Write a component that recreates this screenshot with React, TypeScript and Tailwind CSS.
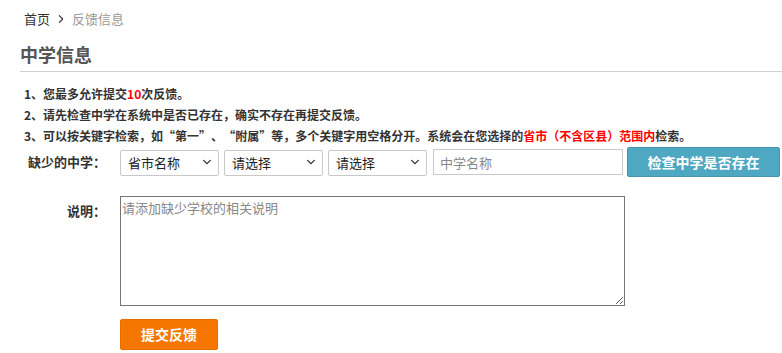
import { ChangeEvent, useState } from "react";
import { IoChevronForward, IoChevronDown } from "react-icons/io5";

const font = "font-['Microsoft_YaHei','Noto_Sans_CJK_SC',sans-serif]";

const SelectBox = ({ value, options, onChange, name }: { value: string; options: string[]; onChange: (e: ChangeEvent<HTMLSelectElement>) => void; name: string }) => (
    <div className="relative w-[99px] h-[26px]">
        <select
            name={name}
            value={value}
            onChange={onChange}
            className="appearance-none w-full h-full border border-[#c8c8c8] rounded-[2px] bg-white pl-[7px] pr-5 text-[13px] text-[#222] outline-none"
        >
            {options.map((o) => (
                <option key={o} value={o}>{o}</option>
            ))}
        </select>
        <IoChevronDown className="absolute right-[6px] top-1/2 -translate-y-1/2 text-[#222] pointer-events-none" size={12} strokeWidth={60} />
    </div>
);

// full width quote marks
const LQ = () => <span className="inline-block w-[12px] text-right">“</span>;
const RQ = () => <span className="inline-block w-[12px] text-left">”</span>;

const App = () => {
    const [form, setForm] = useState({
        city: "省市名称",
        district: "请选择",
        county: "请选择",
        school: "",
        note: "",
    });

    const handelChange = (e: ChangeEvent<HTMLInputElement | HTMLSelectElement | HTMLTextAreaElement>) => {
        setForm({ ...form, [e.target.name]: e.target.value });
    };

    return (
        <div className={`${font} bg-white w-[782px] h-[353px] overflow-hidden text-[#333]`}>
            {/* breadcrumb */}
            <div className="flex items-center pl-[24px] pt-[9px] text-[13px] leading-[20px]">
                <span className="text-[#333]">首页</span>
                <IoChevronForward className="mx-[5px] text-[#333]" size={12} strokeWidth={80} />
                <span className="text-[#999]">反馈信息</span>
            </div>

            {/* title */}
            <div className="ml-[20px] mt-[13px] pb-[5px] border-b border-[#d0d0d0]">
                <h2 className="text-[18px] font-bold text-[#555] leading-[24px]">中学信息</h2>
            </div>

            {/* tips */}
            <ul className="pl-[24px] mt-[11px] text-[12px] font-bold leading-[21px] text-[#333]">
                <li>1、您最多允许提交<span className="text-[#ff0000]">10</span>次反馈。</li>
                <li>2、请先检查中学在系统中是否已存在，确实不存在再提交反馈。</li>
                <li>
                    3、可以按关键字检索，如<LQ />第一<RQ />、<LQ />附属<RQ />等，多个关键字用空格分开。系统会在您选择的
                    <span className="text-[#ff0000]">省市（不含区县）范围内</span>检索。
                </li>
            </ul>

            {/* school row */}
            <div className="flex items-center mt-[1px] pl-[20px]">
                <label className="w-[86px] text-right text-[13px] font-bold text-[#333] mr-[14px]">缺少的中学：</label>
                <div className="flex items-center gap-[5px]">
                    <SelectBox name="city" value={form.city} options={["省市名称"]} onChange={handelChange} />
                    <SelectBox name="district" value={form.district} options={["请选择"]} onChange={handelChange} />
                    <SelectBox name="county" value={form.county} options={["请选择"]} onChange={handelChange} />
                    <input
                        name="school"
                        value={form.school}
                        onChange={handelChange}
                        placeholder="中学名称"
                        className="w-[190px] h-[26px] ml-[1px] border border-[#c8c8c8] px-[6px] text-[13px] placeholder:text-[#888] outline-none"
                    />
                    <button
                        type="button"
                        className="w-[153px] h-[30px] -ml-[1px] bg-[#4fa8c2] border border-[#4496ae] rounded-[2px] text-white text-[14px] font-bold"
                    >
                        检查中学是否存在
                    </button>
                </div>
            </div>

            {/* note row */}
            <div className="flex items-start mt-[19px] pl-[20px]">
                <label className="w-[86px] text-right text-[13px] font-bold text-[#333] mr-[14px] pt-[5px]">说明：</label>
                <textarea
                    name="note"
                    value={form.note}
                    onChange={handelChange}
                    placeholder="请添加缺少学校的相关说明"
                    className="w-[505px] h-[110px] border border-[#767676] px-[1px] py-[2px] text-[13px] leading-[18px] placeholder:text-[#888] outline-none"
                />
            </div>

            {/* submit */}
            <div className="pl-[120px] mt-[13px]">
                <button
                    type="button"
                    className="w-[98px] h-[31px] bg-[#f57600] border border-[#e56e00] rounded-[2px] text-white text-[14px] font-bold"
                >
                    提交反馈
                </button>
            </div>
        </div>
    );
};

export default App;
